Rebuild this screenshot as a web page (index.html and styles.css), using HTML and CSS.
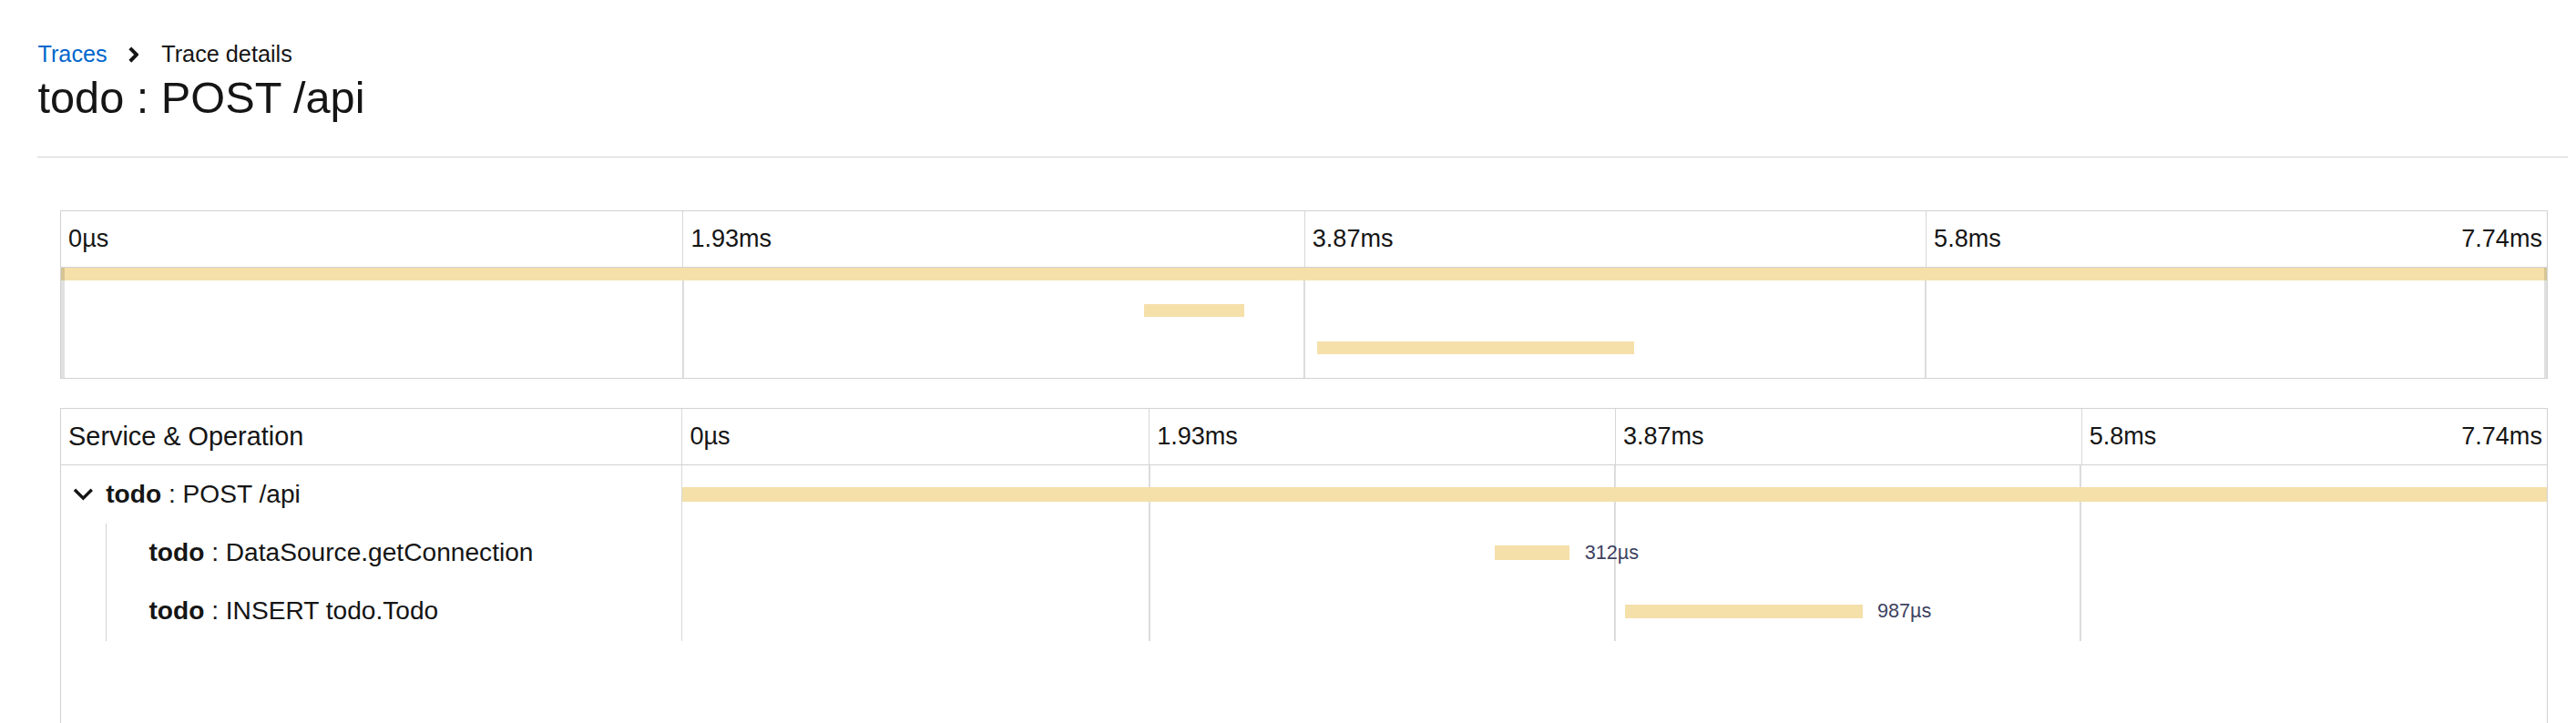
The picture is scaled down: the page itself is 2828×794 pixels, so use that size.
FILE: index.html
```html
<!DOCTYPE html>
<html lang="en">
<head>
<meta charset="utf-8">
<title>Trace details</title>
<link rel="stylesheet" href="styles.css">
</head>
<body>
<div class="page">
  <header class="page-head">
    <nav class="breadcrumb">
      <a class="crumb-link" href="#">Traces</a>
      <svg class="crumb-sep" viewBox="0 0 6 10" aria-hidden="true"><path d="M1 1 L5 5 L1 9"/></svg>
      <span class="crumb-current">Trace details</span>
    </nav>
    <h1 class="title">todo : POST /api</h1>
  </header>

  <main class="content">
    <section class="minimap">
      <div class="ticks mm-ticks">
        <div class="tick">0µs</div>
        <div class="tick">1.93ms</div>
        <div class="tick">3.87ms</div>
        <div class="tick"><span>5.8ms</span><span>7.74ms</span></div>
      </div>
      <div class="mm-body">
        <div class="mm-row"><div class="mm-bar" style="margin-left:0%;width:100%"></div></div>
        <div class="mm-row"><div class="mm-bar" style="margin-left:43.56%;width:4.03%"></div></div>
        <div class="mm-row"><div class="mm-bar" style="margin-left:50.53%;width:12.75%"></div></div>
      </div>
    </section>

    <section class="trace-table">
      <div class="tt-head">
        <div class="tt-name-h">Service &amp; Operation</div>
        <div class="ticks tt-ticks">
          <div class="tick">0µs</div>
          <div class="tick">1.93ms</div>
          <div class="tick">3.87ms</div>
          <div class="tick"><span>5.8ms</span><span>7.74ms</span></div>
        </div>
      </div>

      <div class="tt-row">
        <div class="tt-name">
          <svg class="chev" viewBox="0 0 13 8" aria-hidden="true"><path d="M1 1 L6.5 6.5 L12 1"/></svg>
          <span><b class="svc">todo</b> : POST /api</span>
        </div>
        <div class="tt-timeline">
          <div class="span-bar" style="margin-left:0%;width:100%"></div>
        </div>
      </div>

      <div class="tt-row">
        <div class="tt-name tt-child">
          <div class="child-inner"><span><b class="svc">todo</b> : DataSource.getConnection</span></div>
        </div>
        <div class="tt-timeline">
          <div class="span-bar" style="margin-left:43.56%;width:4.03%"></div>
          <span class="span-dur">312µs</span>
        </div>
      </div>

      <div class="tt-row">
        <div class="tt-name tt-child">
          <div class="child-inner"><span><b class="svc">todo</b> : INSERT todo.Todo</span></div>
        </div>
        <div class="tt-timeline">
          <div class="span-bar" style="margin-left:50.53%;width:12.75%"></div>
          <span class="span-dur">987µs</span>
        </div>
      </div>
    </section>
  </main>
</div>
</body>
</html>
```

FILE: styles.css
```css
html {
  zoom: 1.8036;
  overflow: hidden;
}

body {
  margin: 0;
  background: #ffffff;
  color: #151515;
  font-family: "Liberation Sans", Arial, sans-serif;
}

/* ---------- page header ---------- */
.page-head {
  margin: 0 5px 0 23px;
  padding: 22.5px 0 19.5px;
  border-bottom: 1px solid #d2d2d2;
}

.breadcrumb {
  display: flex;
  align-items: center;
  font-size: 14px;
  line-height: 21px;
}

.crumb-link {
  color: #0066cc;
  text-decoration: none;
}

.crumb-sep {
  width: 6px;
  height: 10px;
  margin: 0 14px 0 13px;
  fill: none;
  stroke: #151515;
  stroke-width: 2.2;
}

.crumb-current {
  color: #151515;
}

.title {
  margin: 0;
  font-size: 27px;
  line-height: 32.4px;
  font-weight: 400;
}

/* ---------- content ---------- */
.content {
  padding: 32px 17px 0 36.6px;
}

.ticks {
  display: grid;
  grid-template-columns: repeat(4, 1fr);
  font-size: 15px;
}

.tick {
  display: flex;
  align-items: center;
  justify-content: space-between;
  padding: 0 3px 0 4.5px;
  border-left: 1px solid #d8d8d8;
  white-space: nowrap;
}

.tick:first-child {
  border-left: 0;
}

/* ---------- minimap ---------- */
.minimap {
  border: 1px solid #d2d2d2;
}

.mm-ticks {
  height: 34px;
  border-bottom: 1px solid #d2d2d2;
}

.mm-body {
  position: relative;
  height: 67px;
  background:
    linear-gradient(#d8d8d8, #d8d8d8) 25% 0 / 1px 100% no-repeat,
    linear-gradient(#d8d8d8, #d8d8d8) 50% 0 / 1px 100% no-repeat,
    linear-gradient(#d8d8d8, #d8d8d8) 75% 0 / 1px 100% no-repeat;
}

.mm-body::before,
.mm-body::after {
  content: "";
  position: absolute;
  top: 0;
  bottom: 0;
  width: 2px;
  background: rgba(0, 0, 0, 0.12);
}

.mm-body::before { left: 0; }
.mm-body::after { right: 0; }

.mm-row {
  height: 22.33px;
}

.mm-bar {
  height: 7.8px;
  background: #f5e0aa;
}

/* ---------- trace table ---------- */
.trace-table {
  margin-top: 18px;
  min-height: 260px;
  border: 1px solid #d2d2d2;
}

.tt-head {
  display: grid;
  grid-template-columns: 25% 75%;
  height: 33.6px;
  border-bottom: 1px solid #d2d2d2;
}

.tt-name-h {
  display: flex;
  align-items: center;
  padding-left: 4.5px;
  font-size: 16px;
  border-right: 1px solid #d8d8d8;
}

.tt-row {
  display: grid;
  grid-template-columns: 25% 75%;
  height: 35.6px;
}

.tt-name {
  display: flex;
  align-items: center;
  padding-left: 7px;
  font-size: 15.6px;
  white-space: nowrap;
  border-right: 1px solid #d8d8d8;
}

.tt-child {
  align-items: stretch;
  padding-left: 26.9px;
}

.child-inner {
  display: flex;
  align-items: center;
  padding-left: 26px;
  border-left: 1px solid #d2d2d2;
}

.svc {
  font-weight: 700;
}

.chev {
  width: 12.6px;
  height: 7.6px;
  margin-right: 7.7px;
  flex: none;
  fill: none;
  stroke: #151515;
  stroke-width: 2;
}

.tt-timeline {
  display: flex;
  align-items: center;
  background:
    linear-gradient(#d8d8d8, #d8d8d8) 25% 0 / 1px 100% no-repeat,
    linear-gradient(#d8d8d8, #d8d8d8) 50% 0 / 1px 100% no-repeat,
    linear-gradient(#d8d8d8, #d8d8d8) 75% 0 / 1px 100% no-repeat;
}

.span-bar {
  flex: none;
  height: 8.7px;
  background: #f5e0aa;
}

.span-dur {
  margin-left: 9px;
  font-size: 12px;
  color: #3d4260;
  white-space: nowrap;
}
```
